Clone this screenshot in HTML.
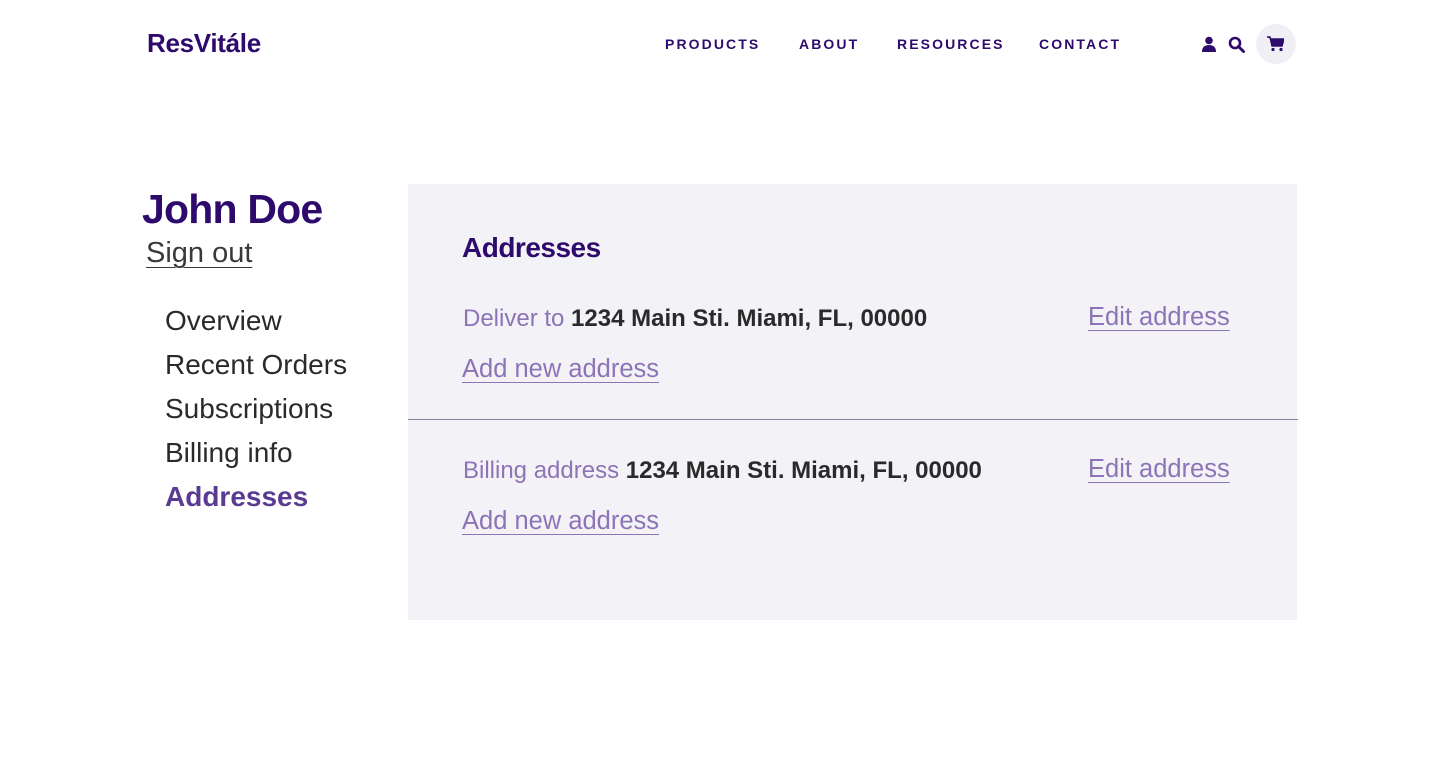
<!DOCTYPE html>
<html><head><meta charset="utf-8"><style>
*{margin:0;padding:0;box-sizing:border-box}
body{width:1440px;height:780px;background:#fff;font-family:"Liberation Sans",sans-serif;position:relative;overflow:hidden}
.a{position:absolute;white-space:nowrap}
.logo{left:147px;top:28px;font-size:26px;font-weight:bold;color:#2d0a6b;letter-spacing:-0.3px}
.nav{top:36px;font-size:14px;font-weight:bold;letter-spacing:2.1px;color:#2d0a6b}
.panel{left:408px;top:184px;width:889px;height:436px;background:#f3f2f7}
.line{left:408px;top:419px;width:890px;height:1px;background:#8a829a}
.u{text-decoration:underline;text-underline-offset:5px;text-decoration-thickness:1px}
.lk{color:#8c74b6;font-size:25.5px}
.side{left:165px;font-size:28px;color:#2a2a2a}
</style></head><body>
<div class="a logo">ResVitále</div>
<div class="a nav" style="left:665px">PRODUCTS</div>
<div class="a nav" style="left:799px">ABOUT</div>
<div class="a nav" style="left:897px">RESOURCES</div>
<div class="a nav" style="left:1039px">CONTACT</div>
<svg class="a" style="left:1201px;top:36px" width="16" height="16" viewBox="0 0 16 16"><circle cx="8" cy="4.5" r="3.8" fill="#2d0a6b"/><path d="M1 16 Q1 9 8 9 Q15 9 15 16Z" fill="#2d0a6b"/></svg>
<svg class="a" style="left:1228px;top:36px" width="17" height="17" viewBox="0 0 17 17"><circle cx="7" cy="7" r="5" fill="none" stroke="#2d0a6b" stroke-width="2.6"/><path d="M10.5 10.5L15.5 15.5" stroke="#2d0a6b" stroke-width="3" stroke-linecap="round"/></svg>
<div class="a" style="left:1256px;top:24px;width:40px;height:40px;border-radius:50%;background:#f1eff6"></div>
<svg class="a" style="left:1267px;top:36px" width="17" height="16" viewBox="0 0 17 16"><path d="M0 1H3L5 10H15L17 3H4" fill="#2d0a6b" stroke="#2d0a6b" stroke-width="1.5"/><circle cx="6" cy="13.5" r="1.6" fill="#2d0a6b"/><circle cx="14" cy="13.5" r="1.6" fill="#2d0a6b"/></svg>

<div class="a" style="left:142px;top:186px;font-size:41px;font-weight:bold;color:#2d0a6b;letter-spacing:-0.8px">John Doe</div>
<div class="a u" style="left:146px;top:237px;font-size:29px;color:#3a3a3a">Sign out</div>
<div class="a side" style="top:305px">Overview</div>
<div class="a side" style="top:349px">Recent Orders</div>
<div class="a side" style="top:393px">Subscriptions</div>
<div class="a side" style="top:437px">Billing info</div>
<div class="a side" style="top:481px;color:#5a3a92;font-weight:bold">Addresses</div>

<div class="a panel"></div>
<div class="a line"></div>
<div class="a" style="left:462px;top:232px;font-size:28px;font-weight:bold;color:#2d0a6b;letter-spacing:-0.5px">Addresses</div>
<div class="a" style="left:463px;top:305px;font-size:24px;color:#8c74b6">Deliver to <b style="color:#2a2a2a">1234 Main Sti. Miami, FL, 00000</b></div>
<div class="a lk u" style="left:1088px;top:303px">Edit address</div>
<div class="a lk u" style="left:462px;top:355px">Add new address</div>
<div class="a" style="left:463px;top:457px;font-size:24px;color:#8c74b6">Billing address <b style="color:#2a2a2a">1234 Main Sti. Miami, FL, 00000</b></div>
<div class="a lk u" style="left:1088px;top:455px">Edit address</div>
<div class="a lk u" style="left:462px;top:507px">Add new address</div>
</body></html>
